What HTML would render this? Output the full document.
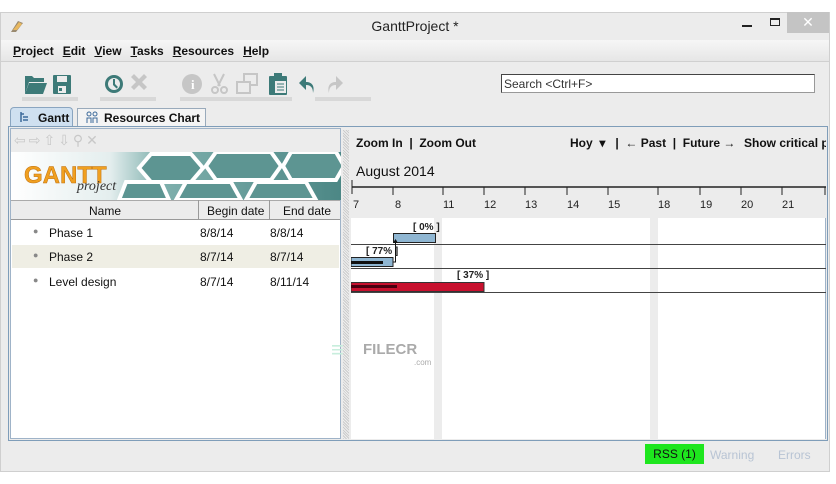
<!DOCTYPE html>
<html><head><meta charset="utf-8"><style>
*{box-sizing:border-box;margin:0;padding:0}
body{width:836px;height:484px;background:#fff;font-family:"Liberation Sans",sans-serif;font-size:12px;color:#111;position:relative;overflow:hidden}
.a{position:absolute}
.menu span{margin-right:9px;font-weight:bold;font-size:12px}
.menu u{text-decoration:underline}
.t{position:absolute;font-size:12px}
</style></head><body>
<div class="a" style="left:0;top:12px;width:830px;height:460px;background:#ececec;border:1px solid #cfcfcf"></div>
<!-- title -->
<svg class="a" style="left:9px;top:18px" width="16" height="16"><path d="M2 14 L9 3 L14 5 L7 14Z" fill="#9a8a70"/><path d="M4 12 L10 4 L13 6 L8 12Z" fill="#e8b860"/></svg>
<div class="a" style="left:0;width:830px;top:18px;text-align:center;font-size:14px;color:#222">GanttProject *</div>
<div class="a" style="left:742px;top:25px;width:10px;height:2px;background:#222"></div>
<div class="a" style="left:770px;top:18px;width:10px;height:8px;border:1px solid #222;border-top-width:2px"></div>
<div class="a" style="left:787px;top:12px;width:42px;height:21px;background:#c4c4c4;color:#fff;text-align:center;font-size:14px;line-height:21px">✕</div>
<!-- menu -->
<div class="a" style="left:1px;top:40px;width:828px;height:22px;background:linear-gradient(#f6f6f6,#e6e6e6);border-bottom:1px solid #d0d0d0"></div>
<div class="a menu" style="left:13px;top:44px"><span><u>P</u>roject</span><span><u>E</u>dit</span><span><u>V</u>iew</span><span><u>T</u>asks</span><span><u>R</u>esources</span><span><u>H</u>elp</span></div>
<!-- toolbar -->
<div class="a" style="left:22px;top:97px;width:56px;height:4px;background:#d8d8d8"></div>
<div class="a" style="left:100px;top:97px;width:56px;height:4px;background:#d8d8d8"></div>
<div class="a" style="left:180px;top:97px;width:112px;height:4px;background:#d8d8d8"></div>
<div class="a" style="left:315px;top:97px;width:56px;height:4px;background:#d8d8d8"></div>
<svg class="a" style="left:20px;top:70px" width="360" height="28">
<g fill="#3d7a78"><path d="M5 6h7l2 2h10v4H9l-4 12z"/><path d="M9 13h18l-4 11H5z"/>
<rect x="33" y="5" width="18" height="19" rx="1"/><rect x="37" y="6" width="10" height="6" fill="#ececec"/><rect x="38" y="16" width="8" height="7" fill="#ececec"/><rect x="39" y="18" width="3" height="3"/>
<circle cx="94" cy="14" r="9"/><circle cx="94" cy="14" r="6" fill="#ececec"/><path d="M93 9h2v5l3 3-1.5 1.5-3.5-3.5z"/>
<path d="M286 12l0-6-7 7 7 7v-5c5 0 7 3 7 8 2-7-1-11-7-11z"/></g>
<g fill="#c6c6c6"><path d="M111 7l3-3 5 5 5-5 3 3-5 5 5 5-3 3-5-5-5 5-3-3 5-5z"/>
<circle cx="172" cy="14" r="10"/>
<path d="M194 4l6 12M204 4l-6 12" stroke="#c6c6c6" stroke-width="2"/><circle cx="195" cy="20" r="3" fill="none" stroke="#c6c6c6" stroke-width="2"/><circle cx="204" cy="20" r="3" fill="none" stroke="#c6c6c6" stroke-width="2"/>
<rect x="224" y="4" width="13" height="11" fill="none" stroke="#c6c6c6" stroke-width="2"/><rect x="217" y="12" width="13" height="11" fill="#ececec" stroke="#c6c6c6" stroke-width="2"/>
<path d="M316 12l0-6 7 7-7 7v-5c-5 0-7 3-7 8-2-7 1-11 7-11z"/></g>
<text x="171" y="19" fill="#fff" font-size="13" font-weight="bold" font-family="Liberation Serif">i</text>
<g fill="#3d7a78"><rect x="249" y="6" width="18" height="19" rx="1"/><rect x="254" y="3" width="8" height="5"/><rect x="255" y="11" width="11" height="12" fill="#ececec"/><path d="M257 14h7M257 17h7M257 20h7" stroke="#3d7a78"/></g>
</svg>
<div class="a" style="left:501px;top:74px;width:314px;height:19px;background:#fff;border:1px solid #555;border-color:#444 #999 #999 #444;font-size:12px;color:#333;padding:2px 2px;line-height:14px">Search &lt;Ctrl+F&gt;</div>
<!-- tabs -->
<div class="a" style="left:10px;top:107px;width:63px;height:20px;background:#cfe0f0;border:1px solid #8aa5c0;border-bottom:none;border-radius:4px 4px 0 0;font-weight:bold;padding:3px 0 0 27px">Gantt</div>
<svg class="a" style="left:19px;top:111px" width="12" height="12"><path d="M2 1v10M2 3h3M4 6h5M4 9h5" stroke="#3d6a9a" stroke-width="1.5"/></svg>
<div class="a" style="left:77px;top:108px;width:129px;height:18px;background:#f4f4f4;border:1px solid #9ab;border-bottom:none;font-weight:bold;padding:2px 0 0 26px">Resources Chart</div>
<svg class="a" style="left:85px;top:110px" width="14" height="14"><circle cx="4" cy="4" r="2" fill="none" stroke="#3d6a9a"/><circle cx="10" cy="4" r="2" fill="none" stroke="#3d6a9a"/><path d="M2 13v-5h4v5M8 13v-5h4v5" fill="none" stroke="#3d6a9a"/></svg>
<!-- main panel -->
<div class="a" style="left:8px;top:126px;width:820px;height:315px;border:1px solid #7f9db9;background:#ececec"></div>
<div class="a" style="left:10px;top:128px;width:331px;height:311px;border:1px solid #9fb3c8;background:#fff"></div>
<div class="a" style="left:11px;top:129px;width:329px;height:23px;background:#ececec"></div>
<div class="a" style="left:14px;top:132px;font-size:14px;color:#c8c8c8;letter-spacing:3px">⇦⇨⇧⇩⚲✕</div>
<!-- banner -->
<svg class="a" style="left:11px;top:152px" width="330" height="48">
<defs><linearGradient id="g" x1="0" x2="1"><stop offset="0" stop-color="#fff"/><stop offset=".3" stop-color="#e4eeee"/><stop offset=".45" stop-color="#7fb0ad"/><stop offset="1" stop-color="#4c8785"/></linearGradient></defs>
<rect width="330" height="48" fill="url(#g)"/>
<g fill="#5d9592" stroke="#fff" stroke-width="4">
<path d="M140 2h40l12 14-12 14h-40l-12-14z"/><path d="M205 0h55l10 14-10 14h-55l-10-14z"/><path d="M280 0h45l8 14-8 14h-45l-8-14z"/>
<path d="M175 30h45l10 18h-65z"/><path d="M245 30h50l10 18h-70z"/><path d="M115 30h35l8 18h-50z"/>
</g>
<text x="13" y="31" font-size="24" font-weight="bold" fill="#f0a020" stroke="#c07010" stroke-width=".5" font-family="Liberation Sans">GANTT</text>
<text x="66" y="38" font-size="14" font-style="italic" fill="#333" font-family="Liberation Serif">project</text>
</svg>
<!-- table header -->
<div class="a" style="left:11px;top:200px;width:329px;height:20px;background:#ececec;border-bottom:1px solid #999;border-top:1px solid #aaa"></div>
<div class="a" style="left:198px;top:200px;width:1px;height:20px;background:#999"></div>
<div class="a" style="left:269px;top:200px;width:1px;height:20px;background:#999"></div>
<div class="t" style="left:89px;top:204px">Name</div>
<div class="t" style="left:207px;top:204px">Begin date</div>
<div class="t" style="left:283px;top:204px">End date</div>
<div class="a" style="left:12px;top:245px;width:327px;height:23px;background:#efeee4"></div>
<div class="t" style="left:33px;top:226px;color:#888;font-size:9px">●</div><div class="t" style="left:49px;top:226px">Phase 1</div><div class="t" style="left:200px;top:226px">8/8/14</div><div class="t" style="left:270px;top:226px">8/8/14</div>
<div class="t" style="left:33px;top:250px;color:#888;font-size:9px">●</div><div class="t" style="left:49px;top:250px">Phase 2</div><div class="t" style="left:200px;top:250px">8/7/14</div><div class="t" style="left:270px;top:250px">8/7/14</div>
<div class="t" style="left:33px;top:275px;color:#888;font-size:9px">●</div><div class="t" style="left:49px;top:275px">Level design</div><div class="t" style="left:200px;top:275px">8/7/14</div><div class="t" style="left:270px;top:275px">8/11/14</div>
<!-- splitter -->
<div class="a" style="left:343px;top:130px;width:6px;height:309px;background:repeating-linear-gradient(45deg,#ccc 0 1px,#eee 1px 2px)"></div>
<!-- chart -->
<div class="a" style="left:351px;top:128px;width:475px;height:311px;background:#fff;border-right:1px solid #9fb3c8"></div>
<div class="a" style="left:351px;top:128px;width:475px;height:90px;background:#ececec"></div>
<div class="t" style="left:356px;top:136px;font-weight:bold">Zoom In &nbsp;|&nbsp; Zoom Out</div>
<div class="t" style="left:570px;top:136px;font-weight:bold">Hoy &nbsp;▾ &nbsp; | &nbsp;← Past &nbsp;| &nbsp;Future →</div>
<div class="t" style="left:744px;top:136px;font-weight:bold;width:82px;overflow:hidden;white-space:nowrap">Show critical path</div>
<div class="t" style="left:356px;top:163px;font-size:14px">August 2014</div>
<div class="a" style="left:434px;top:218px;width:8px;height:221px;background:#ececec"></div>
<div class="a" style="left:650px;top:218px;width:8px;height:221px;background:#ececec"></div>
<svg class="a" style="left:351px;top:178px" width="475" height="120">
<path d="M1 9h474" stroke="#222" stroke-width="1.5"/>
<g stroke="#222"><path d="M1 2v14M42 9v8M92 9v8M133 9v8M174 9v8M216 9v8M257 9v8M307 9v8M349 9v8M390 9v8M431 9v8M474 9v8"/></g>
<g font-size="11" fill="#222" font-family="Liberation Sans"><text x="2" y="30">7</text><text x="44" y="30">8</text><text x="92" y="30">11</text><text x="133" y="30">12</text><text x="174" y="30">13</text><text x="216" y="30">14</text><text x="257" y="30">15</text><text x="307" y="30">18</text><text x="349" y="30">19</text><text x="390" y="30">20</text><text x="431" y="30">21</text></g>
<g stroke="#444"><path d="M0 66.5h475M0 90.5h475M0 114.5h475"/></g>
<rect x="42.5" y="55.5" width="42" height="9" fill="#8fb6d2" stroke="#222"/>
<rect x="0" y="79.5" width="42" height="9" fill="#8fb6d2" stroke="#222"/><rect x="0" y="83" width="32" height="3" fill="#111"/>
<path d="M42.5 84h2v-20" stroke="#111" fill="none"/><path d="M42 65l2.5-4 2.5 4z" fill="#111"/>
<rect x="0" y="104.5" width="133" height="9" fill="#c8102e" stroke="#333"/><rect x="0" y="107" width="46" height="3" fill="#4a0010"/>
<g font-size="10" font-weight="bold" fill="#222" font-family="Liberation Sans"><text x="62" y="52">[ 0% ]</text><text x="15" y="76">[ 77% ]</text><text x="106" y="100">[ 37% ]</text></g>
</svg>
<div class="a" style="left:331px;top:337px;color:#c8eedd;font-size:22px;font-weight:bold;font-style:italic">≡</div>
<div class="a" style="left:363px;top:341px;color:#aaa;font-size:15px;font-weight:bold">FILECR</div>
<div class="a" style="left:414px;top:358px;color:#aaa;font-size:8px">.com</div>
<!-- status -->
<div class="a" style="left:645px;top:444px;width:59px;height:20px;background:#1ee61e;text-align:center;line-height:20px;font-size:12px">RSS (1)</div>
<div class="t" style="left:710px;top:448px;color:#b8c4d4">Warning</div>
<div class="t" style="left:778px;top:448px;color:#b8c4d4">Errors</div>
</body></html>
